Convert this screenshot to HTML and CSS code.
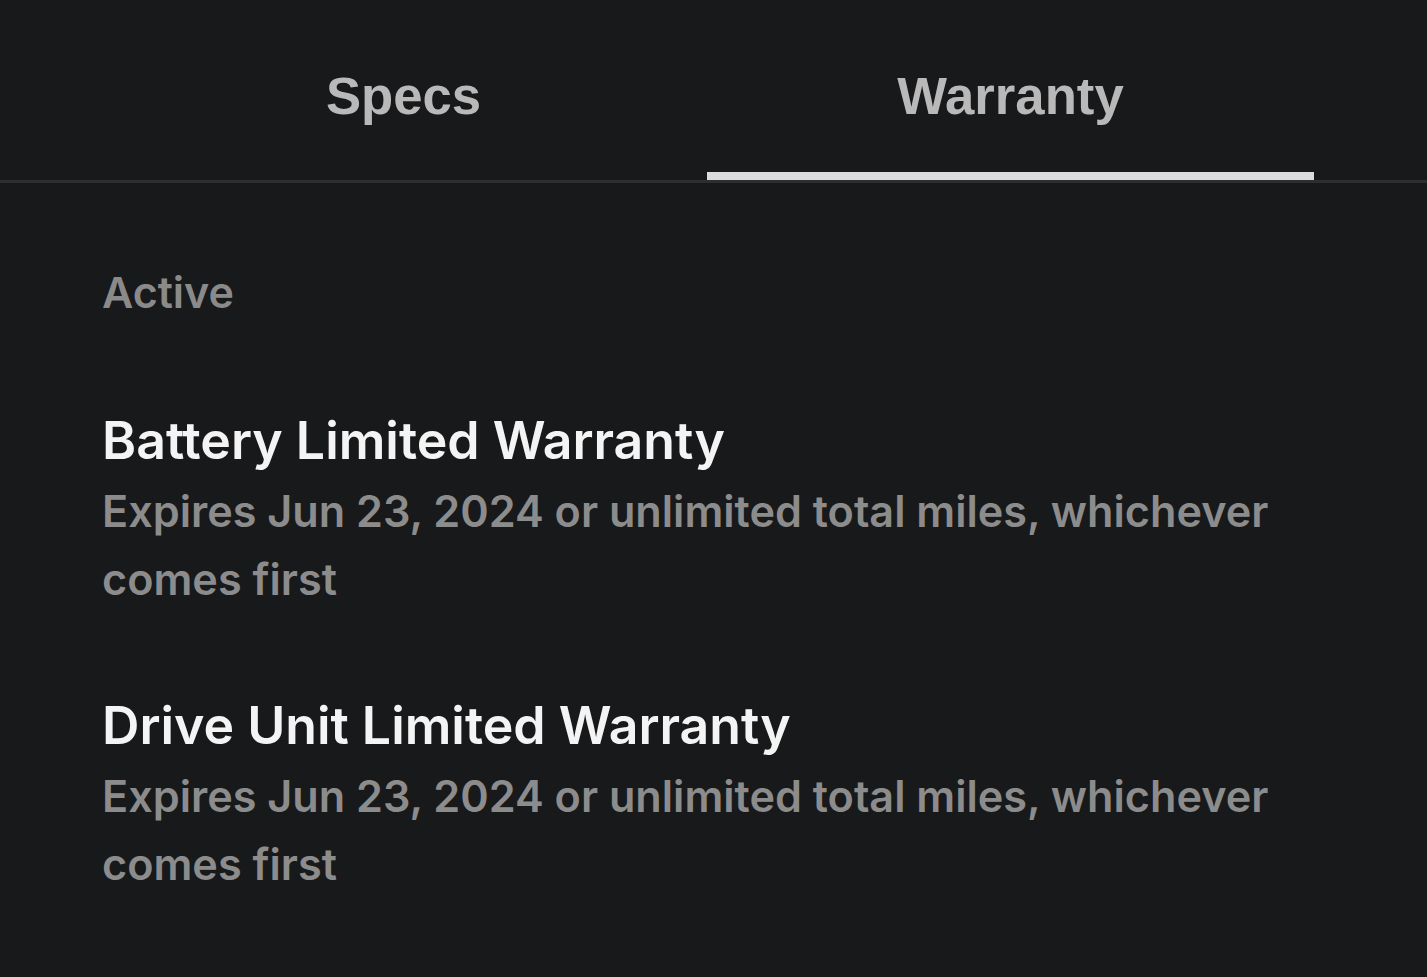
FILE: index.html
```html
<!DOCTYPE html>
<html lang="en">
<head>
<meta charset="utf-8">
<title>Warranty</title>
<link rel="stylesheet" href="styles.css">
</head>
<body>
<div class="page">
  <nav class="tabs">
    <div class="tab">Specs</div>
    <div class="tab tab-active">Warranty</div>
  </nav>
  <main class="content">
    <h2 class="section-label">Active</h2>
    <div class="item">
      <h3 class="item-title">Battery Limited Warranty</h3>
      <p class="item-desc">Expires Jun 23, 2024 or unlimited total miles, whichever comes first</p>
    </div>
    <div class="item">
      <h3 class="item-title">Drive Unit Limited Warranty</h3>
      <p class="item-desc">Expires Jun 23, 2024 or unlimited total miles, whichever comes first</p>
    </div>
  </main>
</div>
</body>
</html>
```

FILE: styles.css
```css
html, body {
  margin: 0;
  padding: 0;
  background: #18191b;
}
body {
  font-family: Inter, "Noto Sans", sans-serif;
  color: #f2f2f2;
  width: 1427px;
  height: 977px;
  overflow: hidden;
}
.tabs {
  display: flex;
  padding: 0 113px 0 100px;
  border-bottom: 3px solid #2d2e30;
}
.tab {
  flex: 1;
  text-align: center;
  font-family: "Liberation Sans", Arial, sans-serif;
  font-weight: 700;
  font-size: 52.7px;
  line-height: 60px;
  color: #b9b9b9;
  padding-top: 66px;
  height: 106px;
  border-bottom: 8px solid transparent;
}
.tab-active {
  border-bottom-color: #dcdcdc;
}
.content {
  padding: 84px 0 0 102px;
}
.section-label {
  margin: 0 0 93px;
  font-size: 43px;
  line-height: 50px;
  font-weight: 600;
  color: #8a8a8a;
}
.item {
  margin-bottom: 82px;
}
.item-title {
  margin: 0 0 7px;
  font-size: 51.8px;
  line-height: 60px;
  font-weight: 600;
  color: #f4f4f4;
}
.item-desc {
  margin: 0;
  width: 1200px;
  font-size: 43.2px;
  line-height: 68px;
  font-weight: 600;
  color: #8c8c8c;
}
```
